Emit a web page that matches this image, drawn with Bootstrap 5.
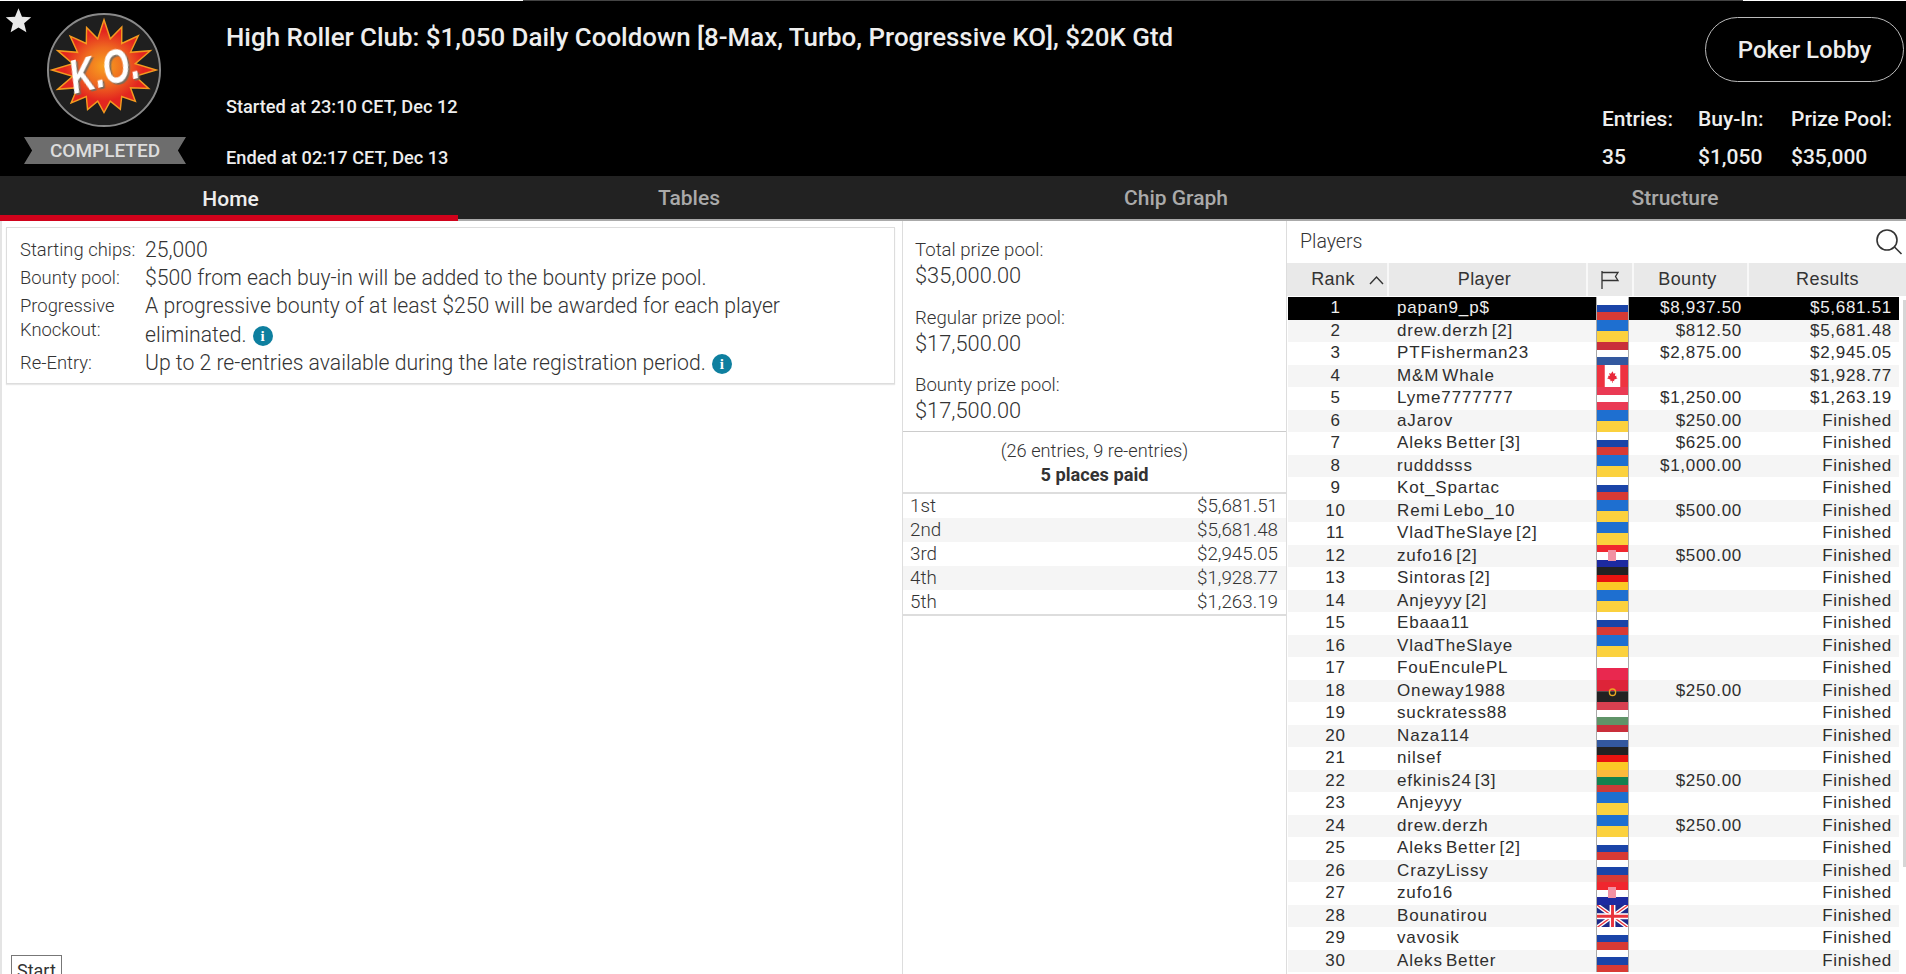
<!DOCTYPE html>
<html lang="en">
<head>
<meta charset="utf-8">
<title>High Roller Club</title>
<link rel="stylesheet" href="https://cdn.jsdelivr.net/npm/bootstrap@5.3.0/dist/css/bootstrap.min.css">
<style>
html,body{height:974px;overflow:hidden;background:#fff;}
body{font-family:Roboto,sans-serif;color:#333;}
.top-strip{height:1px;background:#444;margin-left:523px;width:1220px;}
.head-bar{height:175px;background:#000;color:#eee;}
.logo-col{width:226px;flex:none;}
.fav-star{width:27px;height:27px;margin:6px 0 0 5px;flex:none;display:block;}
.ko-logo{width:116px;height:116px;margin:-22px 0 0 46px;display:block;}
.ko-text{font-family:"Liberation Sans",sans-serif;font-weight:700;font-style:italic;font-size:49px;fill:#fff;filter:drop-shadow(2px 2px 0 #7a6a5a);}
.ribbon{width:162px;height:27px;margin:9px 0 0 24px;background:#6d6d6d;color:#ddd;font-size:19px;font-weight:500;line-height:28px;text-align:center;clip-path:polygon(0 0,100% 0,95% 50%,100% 100%,0 100%,5% 50%);}
.title-col{padding-top:21px;}
.tour-title{font-size:25.9px;font-weight:500;line-height:30px;margin:0;color:#eee;}
.tour-time{font-size:18.2px;font-weight:500;line-height:20px;margin:0;}
.time-a{margin-top:45px;}
.time-b{margin-top:31px;}
.right-col{width:304px;flex:none;padding-top:16px;}
.lobby-btn{display:block;width:199px;height:65px;margin-left:103px;border:1px solid #bbb;border-radius:33px;background:transparent;color:#eee;font-size:24px;font-weight:500;padding:0;}
.stats{margin-top:18px;font-size:21px;font-weight:500;line-height:38px;}
.stat-a{width:96px;}
.stat-b{width:93px;}
.tab-bar{height:45px;background:#222;border-bottom:2px solid #aaa;}
.tab-item{height:43px;font-size:21px;font-weight:500;color:#aaa;text-align:center;line-height:44px;}
.tab-home{width:458px;color:#eee;border-bottom:6px solid #d0021b;height:45px;margin-bottom:-2px;line-height:47px;padding-left:3px;}
.tab-tables{width:462px;}
.tab-chip{width:512px;}
.tab-struct{width:474px;padding-left:12px;}
.body-wrap{height:754px;}
.left-pane{width:902px;flex:none;padding:6px 7px 6px 4px;border-left:2px solid #e4e4e4;}
.rules-box{width:889px;height:157px;border:1px solid #ddd;box-shadow:0 1px 1px #e8e8e8;padding:8px 70px 8px 13px;font-weight:300;}
.rule-row{display:flex;}
.rule-k{width:125px;flex:none;font-size:18.4px;line-height:24px;padding-top:2px;color:#333;}
.rule-v{font-size:21.2px;line-height:28.2px;color:#333;}
.info-dot{display:inline-block;width:20px;height:20px;border-radius:50%;background:#0e7f9f;color:#fff;font:700 15px/20px "Liberation Serif",serif;text-align:center;margin-left:6px;vertical-align:1px;}
.start-btn{display:block;width:fit-content;margin:571px 0 0 5px;border:1px solid #777;padding:3px 5px;font-size:18px;line-height:24px;color:#333;background:#fff;}
.mid-pane{width:385px;flex:none;border-left:1px solid #ddd;border-right:1px solid #ddd;font-weight:300;}
.pool-list{height:210px;padding:16px 12px 0;}
.pool-k{font-size:18.6px;line-height:26px;color:#333;}
.pool-v{font-size:21.8px;line-height:26px;color:#333;margin-bottom:15.5px;}
.paid-box{height:63px;border-top:1px solid #ccc;border-bottom:2px solid #ddd;text-align:center;font-size:18.2px;line-height:24px;padding-top:7px;}
.paid-box b{font-weight:700;}
.pay-row{height:24px;line-height:24px;padding:0 8px 0 7px;font-size:18.8px;}
.pay-row:nth-child(even){background:#f5f5f5;}
.pay-list{border-bottom:2px solid #ddd;}
.right-pane{flex:1;min-width:0;font-family:"Liberation Sans",sans-serif;}
.search-row{height:42px;padding:0 3px 0 13px;font-family:Roboto,sans-serif;font-weight:300;font-size:19.5px;}
.grid-head{height:34px;background:#e9e9e9;font-size:18px;letter-spacing:.4px;border-bottom:1px solid #fff;}
.gh{height:33px;line-height:33px;text-align:center;border-right:2px solid #f8f8f8;position:relative;}
.gh:last-child{border-right:0;}
.g1{width:102px;flex:none;padding-right:8px;}
.g2{width:199px;flex:none;padding-right:6px;}
.g3{width:46px;flex:none;padding:0;}
.g4{width:115px;flex:none;padding-right:6px;}
.g5{flex:1;}
.sort-caret{position:absolute;left:82px;top:12px;width:15px;height:10px;}
.grid-body{position:relative;}
.scroll-thumb{position:absolute;right:0;top:3px;width:3px;height:567px;background:#d6d6d6;}
.player-row{height:22.5px;line-height:22.5px;font-size:17px;letter-spacing:.7px;color:#2e2e2e;width:611px;margin-left:1px;overflow:hidden;}
.player-row:nth-child(even){background:#f5f5f5;}
.player-row.is-me{background:#000;color:#eee;}
.c-rank{width:95px;flex:none;text-align:center;}
.c-name{width:213px;flex:none;padding-left:14px;white-space:nowrap;letter-spacing:.85px;word-spacing:-2.5px;}
.c-flag{width:33px;flex:none;height:22.5px;border-left:1px solid #aaa;border-right:1px solid #aaa;}
.c-flag svg{display:block;width:100%;height:100%;}
.c-bounty{width:119px;flex:none;text-align:right;padding-right:6px;}
.c-result{width:151px;flex:none;text-align:right;padding-right:7px;}
.f-ru{background:linear-gradient(#fff 33%,#1a44a8 33% 66%,#d83a34 66%);}
.f-ua{background:linear-gradient(#1e6fd0 50%,#fbd13e 50%);}
.f-nl{background:linear-gradient(#c92f3a 33%,#fff 33% 66%,#33589f 66%);}
.f-at{background:linear-gradient(#ea3a54 33%,#fff 33% 66%,#ea3a54 66%);}
.f-de{background:linear-gradient(#222 33%,#e8130f 33% 66%,#fbc926 66%);}
.f-hr{background:linear-gradient(#f0262e 33%,#fff 33% 66%,#1d2aa0 66%);position:relative;}
.f-hr::after{content:"";position:absolute;left:11px;top:5px;width:8px;height:11px;background:#f291a3;}
.f-hu{background:linear-gradient(#d84050 33%,#fff 33% 66%,#5f9468 66%);}
.f-lt{background:linear-gradient(#fdb93c 33%,#14804f 33% 66%,#cc3a38 66%);}
.f-pl{background:linear-gradient(#fff 50%,#e9284f 50%);}
</style>
</head>
<body>
<div class="top-strip"></div>
<header class="head-bar d-flex">
  <div class="logo-col">
    <svg class="fav-star" viewBox="0 0 24 24"><path fill="#e8e8e8" d="M12 1l3.1 7.6 8.2.6-6.3 5.3 2 8L12 18.2 5 22.5l2-8L.7 9.2l8.2-.6z"/></svg>
    <svg class="ko-logo" viewBox="0 0 120 120">
      <defs><radialGradient id="bz" cx="50%" cy="50%" r="50%"><stop offset="0" stop-color="#f8a01e"/><stop offset=".4" stop-color="#ef6a20"/><stop offset=".75" stop-color="#e3261f"/><stop offset="1" stop-color="#e3261f"/></radialGradient></defs>
      <circle cx="60" cy="60" r="58" fill="#1f1f1f" stroke="#8a8a8a" stroke-width="2"/>
      <polygon fill="url(#bz)" stroke="#f49a1f" stroke-width="1.5" points="60,8 66.5,27.7 78.4,15.6 78.3,32.6 95.4,24.6 87.4,41.7 108,40.1 92.3,53.5 114,60 92.3,66.5 106.2,79.1 87.4,78.3 92.5,92.5 78.3,87.4 76.9,100.7 66.5,92.3 60,104 53.5,92.3 43,101 41.7,87.4 26,94 32.6,78.3 12,80 27.7,66.5 6,60 27.7,53.5 12,40 32.6,41.7 25,25 41.7,32.6 42,16 53.5,27.7"/>
      <text class="ko-text" x="0" y="77" text-anchor="middle" transform="rotate(-14 60 60) translate(60 0) scale(.72 1)">K.O.</text>
    </svg>
    <div class="ribbon">COMPLETED</div>
  </div>
  <div class="title-col flex-grow-1">
    <h1 class="tour-title">High Roller Club: $1,050 Daily Cooldown [8-Max, Turbo, Progressive KO], $20K Gtd</h1>
    <p class="tour-time time-a">Started at 23:10 CET, Dec 12</p>
    <p class="tour-time time-b">Ended at 02:17 CET, Dec 13</p>
  </div>
  <div class="right-col">
    <button class="lobby-btn" type="button">Poker Lobby</button>
    <div class="stats d-flex">
      <div class="stat-a"><div>Entries:</div><div>35</div></div>
      <div class="stat-b"><div>Buy-In:</div><div>$1,050</div></div>
      <div><div>Prize Pool:</div><div>$35,000</div></div>
    </div>
  </div>
</header>
<nav class="tab-bar d-flex">
  <div class="tab-item tab-home">Home</div>
  <div class="tab-item tab-tables">Tables</div>
  <div class="tab-item tab-chip">Chip Graph</div>
  <div class="tab-item tab-struct">Structure</div>
</nav>
<main class="body-wrap d-flex">
  <section class="left-pane">
    <div class="rules-box">
      <div class="rule-row"><div class="rule-k">Starting chips:</div><div class="rule-v">25,000</div></div>
      <div class="rule-row"><div class="rule-k">Bounty pool:</div><div class="rule-v">$500 from each buy-in will be added to the bounty prize pool.</div></div>
      <div class="rule-row"><div class="rule-k">Progressive Knockout:</div><div class="rule-v">A progressive bounty of at least $250 will be awarded for each player eliminated.<span class="info-dot">i</span></div></div>
      <div class="rule-row"><div class="rule-k">Re-Entry:</div><div class="rule-v">Up to 2 re-entries available during the late registration period.<span class="info-dot">i</span></div></div>
    </div>
    <div class="start-btn">Start</div>
  </section>
  <section class="mid-pane">
    <div class="pool-list">
      <div class="pool-k">Total prize pool:</div><div class="pool-v">$35,000.00</div>
      <div class="pool-k">Regular prize pool:</div><div class="pool-v">$17,500.00</div>
      <div class="pool-k">Bounty prize pool:</div><div class="pool-v">$17,500.00</div>
    </div>
    <div class="paid-box">(26 entries, 9 re-entries)<br><b>5 places paid</b></div>
    <div class="pay-list">
      <div class="pay-row d-flex justify-content-between"><span>1st</span><span>$5,681.51</span></div>
      <div class="pay-row d-flex justify-content-between"><span>2nd</span><span>$5,681.48</span></div>
      <div class="pay-row d-flex justify-content-between"><span>3rd</span><span>$2,945.05</span></div>
      <div class="pay-row d-flex justify-content-between"><span>4th</span><span>$1,928.77</span></div>
      <div class="pay-row d-flex justify-content-between"><span>5th</span><span>$1,263.19</span></div>
    </div>
  </section>
  <section class="right-pane">
    <div class="search-row d-flex justify-content-between align-items-center">
      <span>Players</span>
      <svg width="28" height="26" viewBox="0 0 28 26" fill="none" stroke="#333" stroke-width="1.6"><circle cx="12" cy="11" r="10"/><path d="M19.5 18l7 7"/></svg>
    </div>
    <div class="grid-head d-flex">
      <div class="gh g1">Rank<svg class="sort-caret" viewBox="0 0 15 10" fill="none" stroke="#333" stroke-width="1.4"><path d="M1 9l6.5-7 6.5 7"/></svg></div>
      <div class="gh g2">Player</div>
      <div class="gh g3"><svg width="22" height="20" viewBox="0 0 22 20" fill="none" stroke="#333" stroke-width="1.3"><path d="M3 1v18M3 2.5h16l-2.5 4 2.5 4H3"/></svg></div>
      <div class="gh g4">Bounty</div>
      <div class="gh g5">Results</div>
    </div>
    <div class="grid-body">
      <div class="player-row is-me d-flex"><div class="c-rank">1</div><div class="c-name">papan9_p$</div><div class="c-flag f-ru"></div><div class="c-bounty">$8,937.50</div><div class="c-result">$5,681.51</div></div>
      <div class="player-row d-flex"><div class="c-rank">2</div><div class="c-name">drew.derzh [2]</div><div class="c-flag f-ua"></div><div class="c-bounty">$812.50</div><div class="c-result">$5,681.48</div></div>
      <div class="player-row d-flex"><div class="c-rank">3</div><div class="c-name">PTFisherman23</div><div class="c-flag f-nl"></div><div class="c-bounty">$2,875.00</div><div class="c-result">$2,945.05</div></div>
      <div class="player-row d-flex"><div class="c-rank">4</div><div class="c-name">M&amp;M Whale</div><div class="c-flag"><svg viewBox="0 0 32 22" preserveAspectRatio="none"><rect width="32" height="22" fill="#ee3340"/><rect x="8" width="16" height="22" fill="#fff"/><path fill="#e8293a" d="M16 6l1.2 2.5 1.8-.7-.6 3 1.8-.4-.4 1.6 1.4 1-3.6 1.4.3 1.4-1.6-.3-.3 2h-.4l-.3-2-1.6.3.3-1.4-3.6-1.4 1.4-1-.4-1.6 1.8.4-.6-3 1.8.7z"/></svg></div><div class="c-bounty"></div><div class="c-result">$1,928.77</div></div>
      <div class="player-row d-flex"><div class="c-rank">5</div><div class="c-name">Lyme7777777</div><div class="c-flag f-at"></div><div class="c-bounty">$1,250.00</div><div class="c-result">$1,263.19</div></div>
      <div class="player-row d-flex"><div class="c-rank">6</div><div class="c-name">aJarov</div><div class="c-flag f-ua"></div><div class="c-bounty">$250.00</div><div class="c-result">Finished</div></div>
      <div class="player-row d-flex"><div class="c-rank">7</div><div class="c-name">Aleks Better [3]</div><div class="c-flag f-ru"></div><div class="c-bounty">$625.00</div><div class="c-result">Finished</div></div>
      <div class="player-row d-flex"><div class="c-rank">8</div><div class="c-name">rudddsss</div><div class="c-flag f-ua"></div><div class="c-bounty">$1,000.00</div><div class="c-result">Finished</div></div>
      <div class="player-row d-flex"><div class="c-rank">9</div><div class="c-name">Kot_Spartac</div><div class="c-flag f-ru"></div><div class="c-bounty"></div><div class="c-result">Finished</div></div>
      <div class="player-row d-flex"><div class="c-rank">10</div><div class="c-name">Remi Lebo_10</div><div class="c-flag f-ua"></div><div class="c-bounty">$500.00</div><div class="c-result">Finished</div></div>
      <div class="player-row d-flex"><div class="c-rank">11</div><div class="c-name">VladTheSlaye [2]</div><div class="c-flag f-ua"></div><div class="c-bounty"></div><div class="c-result">Finished</div></div>
      <div class="player-row d-flex"><div class="c-rank">12</div><div class="c-name">zufo16 [2]</div><div class="c-flag f-hr"></div><div class="c-bounty">$500.00</div><div class="c-result">Finished</div></div>
      <div class="player-row d-flex"><div class="c-rank">13</div><div class="c-name">Sintoras [2]</div><div class="c-flag f-de"></div><div class="c-bounty"></div><div class="c-result">Finished</div></div>
      <div class="player-row d-flex"><div class="c-rank">14</div><div class="c-name">Anjeyyy [2]</div><div class="c-flag f-ua"></div><div class="c-bounty"></div><div class="c-result">Finished</div></div>
      <div class="player-row d-flex"><div class="c-rank">15</div><div class="c-name">Ebaaa11</div><div class="c-flag f-ru"></div><div class="c-bounty"></div><div class="c-result">Finished</div></div>
      <div class="player-row d-flex"><div class="c-rank">16</div><div class="c-name">VladTheSlaye</div><div class="c-flag f-ua"></div><div class="c-bounty"></div><div class="c-result">Finished</div></div>
      <div class="player-row d-flex"><div class="c-rank">17</div><div class="c-name">FouEnculePL</div><div class="c-flag f-pl"></div><div class="c-bounty"></div><div class="c-result">Finished</div></div>
      <div class="player-row d-flex"><div class="c-rank">18</div><div class="c-name">Oneway1988</div><div class="c-flag"><svg viewBox="0 0 32 22" preserveAspectRatio="none"><rect width="32" height="11" fill="#dd2438"/><rect y="11" width="32" height="11" fill="#222"/><circle cx="16" cy="12" r="3.2" fill="none" stroke="#e8a820" stroke-width="1.4"/></svg></div><div class="c-bounty">$250.00</div><div class="c-result">Finished</div></div>
      <div class="player-row d-flex"><div class="c-rank">19</div><div class="c-name">suckratess88</div><div class="c-flag f-hu"></div><div class="c-bounty"></div><div class="c-result">Finished</div></div>
      <div class="player-row d-flex"><div class="c-rank">20</div><div class="c-name">Naza114</div><div class="c-flag f-nl"></div><div class="c-bounty"></div><div class="c-result">Finished</div></div>
      <div class="player-row d-flex"><div class="c-rank">21</div><div class="c-name">nilsef</div><div class="c-flag f-de"></div><div class="c-bounty"></div><div class="c-result">Finished</div></div>
      <div class="player-row d-flex"><div class="c-rank">22</div><div class="c-name">efkinis24 [3]</div><div class="c-flag f-lt"></div><div class="c-bounty">$250.00</div><div class="c-result">Finished</div></div>
      <div class="player-row d-flex"><div class="c-rank">23</div><div class="c-name">Anjeyyy</div><div class="c-flag f-ua"></div><div class="c-bounty"></div><div class="c-result">Finished</div></div>
      <div class="player-row d-flex"><div class="c-rank">24</div><div class="c-name">drew.derzh</div><div class="c-flag f-ua"></div><div class="c-bounty">$250.00</div><div class="c-result">Finished</div></div>
      <div class="player-row d-flex"><div class="c-rank">25</div><div class="c-name">Aleks Better [2]</div><div class="c-flag f-ru"></div><div class="c-bounty"></div><div class="c-result">Finished</div></div>
      <div class="player-row d-flex"><div class="c-rank">26</div><div class="c-name">CrazyLissy</div><div class="c-flag f-ru"></div><div class="c-bounty"></div><div class="c-result">Finished</div></div>
      <div class="player-row d-flex"><div class="c-rank">27</div><div class="c-name">zufo16</div><div class="c-flag f-hr"></div><div class="c-bounty"></div><div class="c-result">Finished</div></div>
      <div class="player-row d-flex"><div class="c-rank">28</div><div class="c-name">Bounatirou</div><div class="c-flag"><svg viewBox="0 0 32 22" preserveAspectRatio="none"><rect width="32" height="22" fill="#1d2a8a"/><path d="M0 0l32 22M32 0L0 22" stroke="#fff" stroke-width="4"/><path d="M0 0l32 22M32 0L0 22" stroke="#e8333c" stroke-width="1.4"/><path d="M16 0v22M0 11h32" stroke="#fff" stroke-width="6"/><path d="M16 0v22M0 11h32" stroke="#e8333c" stroke-width="3"/></svg></div><div class="c-bounty"></div><div class="c-result">Finished</div></div>
      <div class="player-row d-flex"><div class="c-rank">29</div><div class="c-name">vavosik</div><div class="c-flag f-ru"></div><div class="c-bounty"></div><div class="c-result">Finished</div></div>
      <div class="player-row d-flex"><div class="c-rank">30</div><div class="c-name">Aleks Better</div><div class="c-flag f-ru"></div><div class="c-bounty"></div><div class="c-result">Finished</div></div>
      <div class="scroll-thumb"></div>
    </div>
  </section>
</main>
<script src="https://cdn.jsdelivr.net/npm/bootstrap@5.3.0/dist/js/bootstrap.bundle.min.js"></script>
</body>
</html>
